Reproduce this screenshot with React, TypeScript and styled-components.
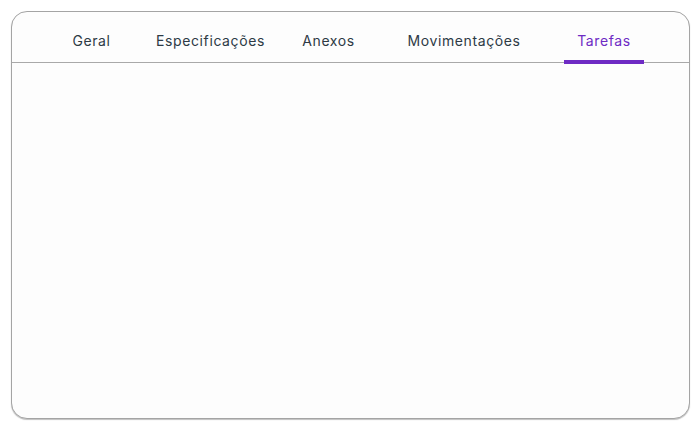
import React, { useState } from 'react';
import styled, { createGlobalStyle } from 'styled-components';

const GlobalStyle = createGlobalStyle`
  html, body {
    margin: 0;
    padding: 0;
    background: #ffffff;
  }
  body {
    font-family: 'Inter', 'Open Sans', sans-serif;
  }
`;

const tabs = [
  { label: 'Geral', width: 73 },
  { label: 'Especificações', width: 165 },
  { label: 'Anexos', width: 71 },
  { label: 'Movimentações', width: 200 },
  { label: 'Tarefas', width: 80 },
];

const App: React.FC = () => {
  const [active, setActive] = useState('Tarefas');

  return (
    <>
      <GlobalStyle />
      <Page>
        <Card>
          <TabBar>
            {tabs.map((t) => (
              <Tab
                key={t.label}
                $width={t.width}
                $active={active === t.label}
                onClick={() => setActive(t.label)}
              >
                {t.label}
              </Tab>
            ))}
          </TabBar>
          <Content />
        </Card>
      </Page>
    </>
  );
};

const Page = styled.div`
  padding: 11px;
  width: 700px;
  height: 431px;
  box-sizing: border-box;
`;

const Card = styled.div`
  display: flex;
  flex-direction: column;
  width: 679px;
  height: 408px;
  box-sizing: border-box;
  border: 1px solid #a4a4a4;
  border-radius: 16px;
  background-color: #fdfdfd;
  box-shadow: 0 1px 1px rgba(0, 0, 0, 0.25);
  overflow: hidden;
`;

const TabBar = styled.div`
  display: flex;
  align-items: stretch;
  height: 50px;
  padding-left: 43px;
  border-bottom: 1px solid #a9a9a9;
`;

const Tab = styled.button<{ $width: number; $active: boolean }>`
  position: relative;
  width: ${(p) => p.$width}px;
  padding: 6px 0 0;
  margin: 0;
  border: none;
  background: transparent;
  font-family: 'Inter', 'Open Sans', sans-serif;
  font-size: 14px;
  font-weight: 400;
  letter-spacing: 0.6px;
  color: ${(p) => (p.$active ? '#6e2bc4' : '#2d3a45')};
  cursor: pointer;
  white-space: nowrap;

  &::after {
    content: '';
    display: ${(p) => (p.$active ? 'block' : 'none')};
    position: absolute;
    left: 0;
    right: 0;
    bottom: -2px;
    height: 4px;
    background-color: #6e2bc4;
  }
`;

const Content = styled.div`
  flex: 1;
`;

export default App;
